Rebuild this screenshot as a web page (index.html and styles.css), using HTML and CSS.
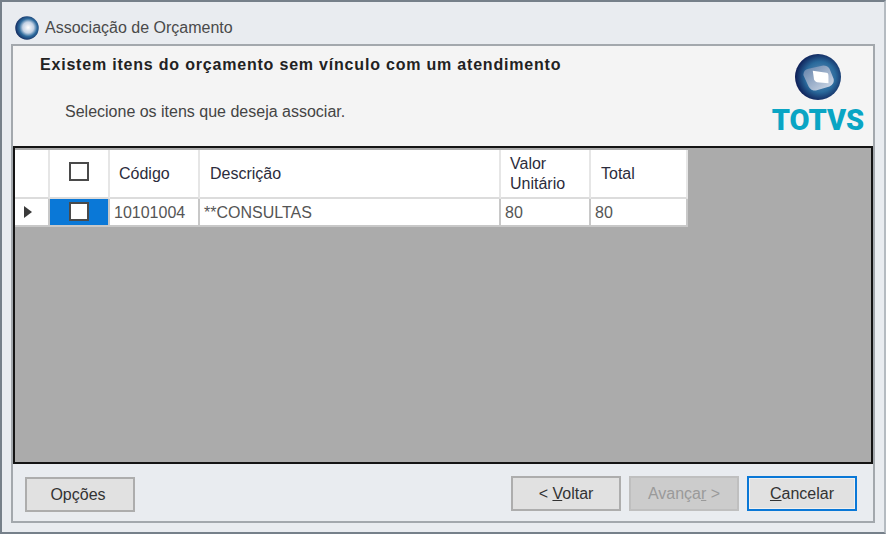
FILE: index.html
```html
<!DOCTYPE html>
<html lang="pt-BR">
<head>
  <meta charset="UTF-8" />
  <title>Associação de Orçamento</title>
  <link rel="stylesheet" href="styles.css">
</head>
<body>
  <div class="window">
    <div class="titlebar">
      <svg class="title-icon" width="24" height="24" viewBox="0 0 44 44">
        <defs>
          <radialGradient id="orbA" cx="0.55" cy="0.48" r="0.58">
            <stop offset="0" stop-color="#ffffff"/>
            <stop offset="0.4" stop-color="#c4d2e4"/>
            <stop offset="0.65" stop-color="#2f6c9e"/>
            <stop offset="1" stop-color="#0c1f55"/>
          </radialGradient>
        </defs>
        <circle cx="22" cy="22" r="21.5" fill="url(#orbA)"/>
      </svg>
      <span class="title-text">Associação de Orçamento</span>
    </div>

    <div class="panel">
      <div class="header">
        <div class="header-text">
          <h1>Existem itens do orçamento sem vínculo com um atendimento</h1>
          <p>Selecione os itens que deseja associar.</p>
        </div>
        <div class="logo">
          <svg width="46" height="46" viewBox="0 0 44 44">
            <defs>
              <radialGradient id="orbB" cx="0.55" cy="0.5" r="0.55">
                <stop offset="0" stop-color="#6f93bb"/>
                <stop offset="0.6" stop-color="#2a6a9c"/>
                <stop offset="1" stop-color="#0d1c54"/>
              </radialGradient>
              <linearGradient id="orbC" x1="0" y1="0" x2="1" y2="1">
                <stop offset="0" stop-color="#5f7fa8"/>
                <stop offset="1" stop-color="#d8e0ec"/>
              </linearGradient>
            </defs>
            <circle cx="22" cy="22" r="22" fill="url(#orbB)"/>
            <path d="M8 20 Q8 15 13 14 L27 11 Q31 11 33 14 L37 24 Q38 29 33 31 L20 35 Q15 35 13 31 Z" fill="url(#orbC)"/>
            <path d="M17 16 L30 18 Q32 18 32 21 L32 28 L21 27 Q18 26 18 23 Z" fill="#ffffff"/>
          </svg>
          <span class="logo-name">TOTVS</span>
        </div>
      </div>

      <div class="grid-area">
        <div class="grid">
          <div class="cell head"></div>
          <div class="cell head center"><span class="check check-head"></span></div>
          <div class="cell head pad-code">Código</div>
          <div class="cell head pad-desc">Descrição</div>
          <div class="cell head pad-val">Valor<br>Unitário</div>
          <div class="cell head pad-total">Total</div>

          <div class="cell row-head"><span class="arrow"></span></div>
          <div class="cell selected center"><span class="check"></span></div>
          <div class="cell data">10101004</div>
          <div class="cell data">**CONSULTAS</div>
          <div class="cell data">80</div>
          <div class="cell data">80</div>
        </div>
      </div>

      <div class="footer">
        <button class="btn btn-options">Opções</button>
        <div class="footer-right">
          <button class="btn">&lt; <u>V</u>oltar</button>
          <button class="btn disabled">Avança<u>r</u> &gt;</button>
          <button class="btn focused"><u>C</u>ancelar</button>
        </div>
      </div>
    </div>
  </div>
</body>
</html>
```

FILE: styles.css
```css
* {
  margin: 0; padding: 0;
  box-sizing: border-box;
  font-family: 'Liberation Sans', Arial, sans-serif;
}

body {
  width: 886px;
  height: 534px;
  overflow: hidden;
  background: #e9ecf0;
}

.window {
  height: 534px;
  display: flex;
  flex-direction: column;
  background: #e9ecf0;
  border: 2px solid #76808a;
  border-right-color: #b5bbc1;
  padding: 0 9px 9px 9px;
}

.titlebar {
  height: 42px;
  display: flex;
  align-items: center;
  gap: 6px;
  padding: 9px 0 0 4px;
  color: #4a4a4a;
  font-size: 16px;
}

.panel {
  flex: 1;
  display: flex;
  flex-direction: column;
  border: 2px solid #a3a8ad;
}

.header {
  height: 100px;
  background: #f4f4f4;
  display: flex;
  justify-content: space-between;
  flex-shrink: 0;
}

.header h1 {
  font-size: 16px;
  font-weight: bold;
  letter-spacing: 0.8px;
  color: #222;
  margin: 10px 0 0 27px;
}

.header p {
  font-size: 16px;
  color: #444;
  margin: 29px 0 0 52px;
}

.logo {
  width: 100px;
  margin-right: 5px;
  display: flex;
  flex-direction: column;
  align-items: center;
  padding-top: 8px;
}

.logo-name {
  font-family: Roboto, sans-serif;
  font-size: 29px;
  line-height: 30px;
  font-weight: 900;
  color: #0aa5c4;
  margin-top: 5px;
}

.grid-area {
  height: 318px;
  background: #ababab;
  border: 2px solid #141414;
  padding-top: 2px;
  flex-shrink: 0;
}

.grid {
  display: grid;
  grid-template-columns: 35px 60px 90px 301px 90px 97px;
  grid-template-rows: 49px 28px;
  width: 673px;
  background: #ffffff;
}

.cell {
  display: flex;
  align-items: center;
  font-size: 16px;
  color: #333;
  background: #ffffff;
  border-right: 2px solid #e6e6e6;
  border-bottom: 2px solid #c8c8c8;
}

.head {
  border-bottom: 2px solid #dcdcdc;
  color: #2c2c3c;
  line-height: 20px;
}

.head:last-of-type { border-right: 0; }

.center { justify-content: center; }

.pad-code { padding-left: 9px; }
.pad-desc { padding-left: 10px; }
.pad-val { padding-left: 9px; }
.pad-total { padding-left: 10px; }

.data {
  padding: 1px 0 0 4px;
  color: #555;
  border-right-color: #c8c8c8;
}

.row-head { padding-left: 9px; border-right-color: #c8c8c8; }

.selected { background: #0a78d7; border-right-color: #c8c8c8; }

.arrow {
  width: 0;
  height: 0;
  border-left: 8px solid #3a3a3a;
  border-top: 6px solid transparent;
  border-bottom: 6px solid transparent;
}

.check {
  width: 20px;
  height: 19px;
  background: #ffffff;
  border: 2px solid #4a4a4a;
  margin-bottom: 2px;
}

.check-head { margin-bottom: 4px; }

.footer {
  flex: 1;
  display: flex;
  justify-content: space-between;
  align-items: flex-start;
  padding: 12px 16px 0 12px;
}

.footer-right {
  display: flex;
  gap: 8px;
}

.btn {
  width: 110px;
  height: 35px;
  background: #e1e1e1;
  border: 2px solid #adadad;
  font-size: 16px;
  color: #333;
}

.btn-options {
  margin-top: 1px;
  padding-right: 4px;
}

.disabled {
  background: #cccccc;
  border-color: #bfbfbf;
  color: #9a9a9a;
}

.focused {
  border-color: #0a78d7;
  box-shadow: inset 0 0 0 1px #f0f0f0;
}
```
